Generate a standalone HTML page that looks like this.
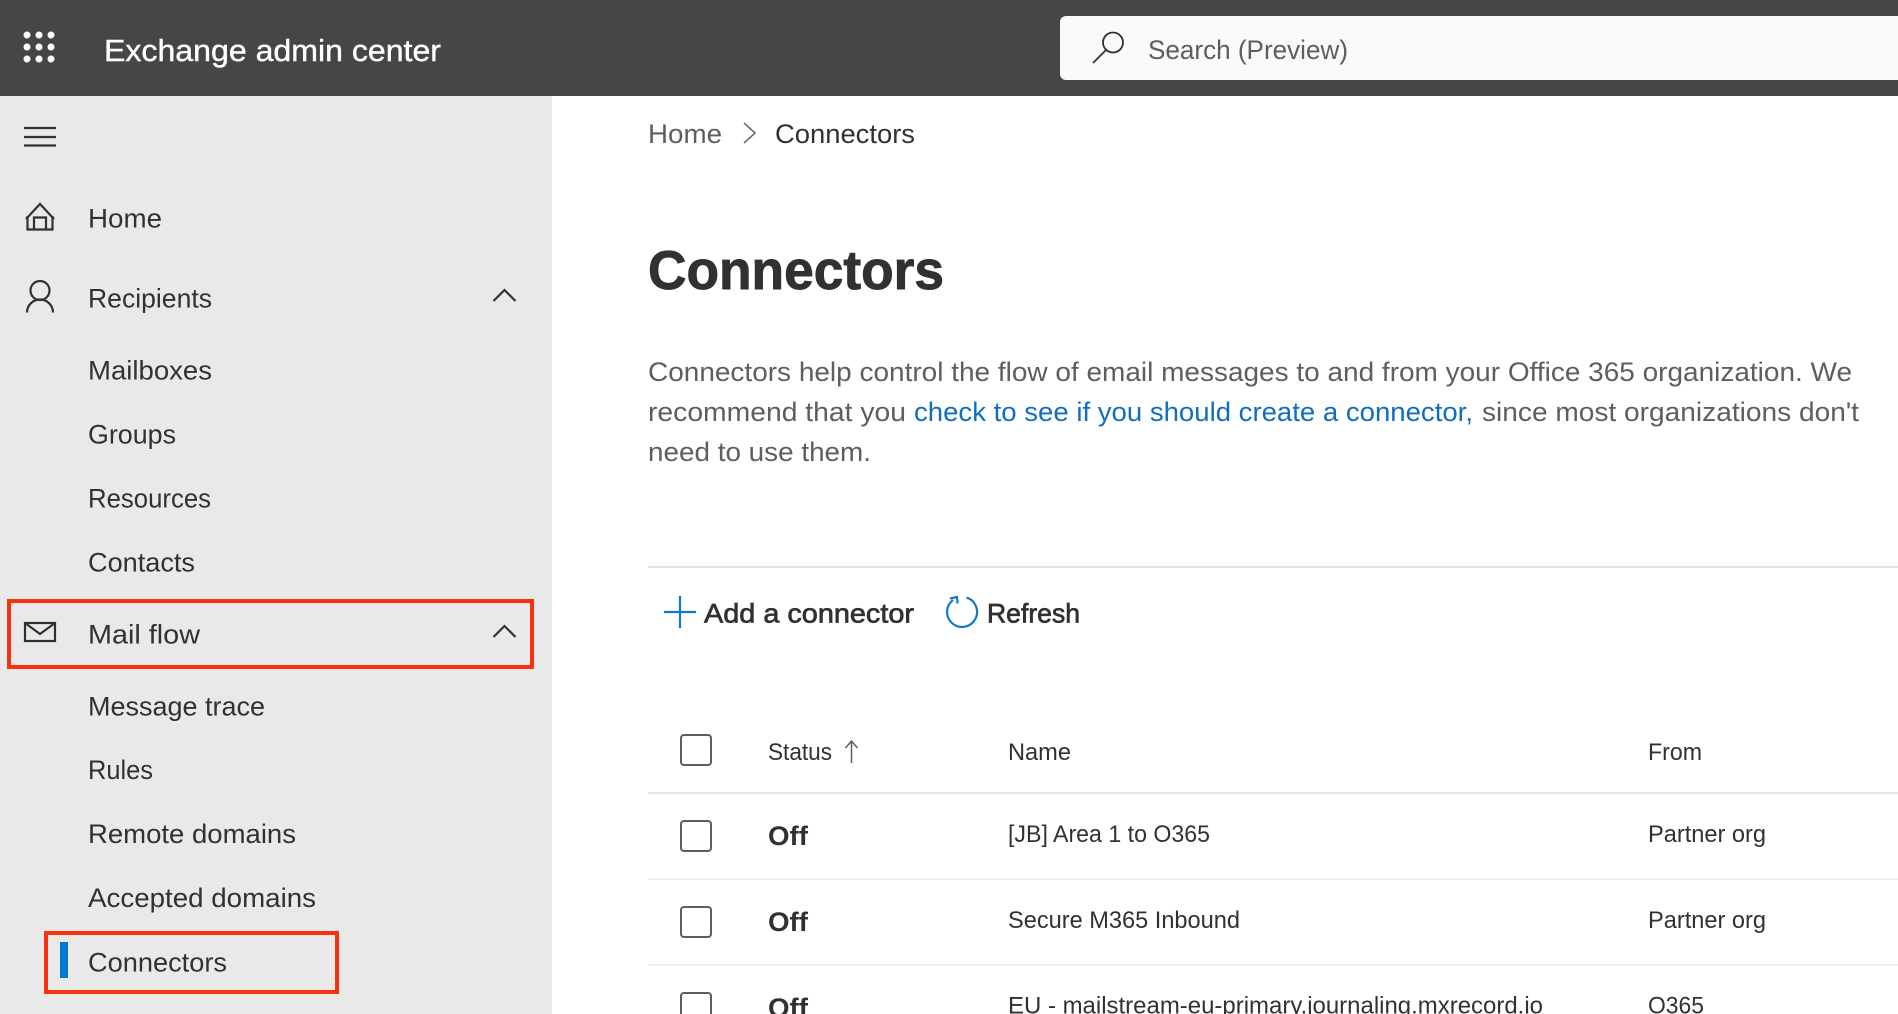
<!DOCTYPE html>
<html lang="en">
<head>
<meta charset="utf-8">
<title>Exchange admin center</title>
<style>
html,body{margin:0;padding:0;background:#fff;width:1898px;height:1014px;overflow:hidden}
svg{display:block}
text{font-family:"Liberation Sans",sans-serif;fill:#323130;font-size:27px;transform:translateX(-1px)}
.h{font-size:24px}
.g{fill:#5f5e5c}
.l{fill:#106ebe}
.ico{fill:none;stroke:#323130;stroke-width:2.200}
.blue{fill:none;stroke:#1279c9;stroke-width:2.200}
.sb{stroke:#323130;stroke-width:.7px}
</style>
</head>
<body>
<svg width="1898" height="1014" viewBox="0 0 1898 1014" xmlns="http://www.w3.org/2000/svg">
<rect width="1898" height="1014" fill="#fff"/>
<rect x="0" y="96" width="552" height="918" fill="#e9e9e9"/>
<rect x="0" y="0" width="1898" height="96" fill="#484644"/>

<g fill="#fff">
<circle cx="27" cy="35" r="3.500"/><circle cx="39" cy="35" r="3.500"/><circle cx="51" cy="35" r="3.500"/>
<circle cx="27" cy="47" r="3.500"/><circle cx="39" cy="47" r="3.500"/><circle cx="51" cy="47" r="3.500"/>
<circle cx="27" cy="59" r="3.500"/><circle cx="39" cy="59" r="3.500"/><circle cx="51" cy="59" r="3.500"/>
</g>
<text x="105" y="61" style="font-size:31px;fill:#fff;stroke:#fff;stroke-width:.4px" textLength="337" lengthAdjust="spacingAndGlyphs">Exchange admin center</text>

<path d="M1066 16H1898V80H1066a6 6 0 0 1-6-6V22a6 6 0 0 1 6-6z" fill="#fafafa"/>
<circle cx="1113" cy="42.500" r="10" fill="none" stroke="#323130" stroke-width="1.800"/>
<path d="M1106 50 L1093 63" fill="none" stroke="#323130" stroke-width="1.800"/>
<text x="1149" y="59" class="g" style="font-size:27px" textLength="200" lengthAdjust="spacingAndGlyphs">Search (Preview)</text>

<path d="M24 128H56M24 137H56M24 145.500H56" class="ico"/>

<path d="M26 219 L40 204 L54 219 M27.500 216 V229.500 H52.500 V216 M34 229.500 V217.500 H46 V229.500" class="ico"/>
<text x="89" y="227.500" textLength="74" lengthAdjust="spacingAndGlyphs">Home</text>

<circle cx="40" cy="290.500" r="9.500" class="ico"/>
<path d="M27 312.500 A13 13 0 0 1 53 312.500" class="ico"/>
<text x="89" y="307.500" textLength="124" lengthAdjust="spacingAndGlyphs">Recipients</text>
<path d="M493.500 301 L504.500 290 L515.500 301" class="ico"/>

<text x="89" y="379.500" textLength="124" lengthAdjust="spacingAndGlyphs">Mailboxes</text>
<text x="89" y="443.500" textLength="88" lengthAdjust="spacingAndGlyphs">Groups</text>
<text x="89" y="507.500" textLength="123" lengthAdjust="spacingAndGlyphs">Resources</text>
<text x="89" y="571.500" textLength="107" lengthAdjust="spacingAndGlyphs">Contacts</text>

<rect x="25" y="623" width="30" height="18" class="ico"/>
<path d="M25 623 L40 634 L55 623" class="ico"/>
<text x="89" y="643.500" textLength="112" lengthAdjust="spacingAndGlyphs">Mail flow</text>
<path d="M493.500 637 L504.500 626 L515.500 637" class="ico"/>
<rect x="9" y="601" width="523" height="66" fill="none" stroke="#f5330f" stroke-width="4"/>

<text x="89" y="715.500" textLength="177" lengthAdjust="spacingAndGlyphs">Message trace</text>
<text x="89" y="779" textLength="65" lengthAdjust="spacingAndGlyphs">Rules</text>
<text x="89" y="843" textLength="208" lengthAdjust="spacingAndGlyphs">Remote domains</text>
<text x="89" y="907" textLength="228" lengthAdjust="spacingAndGlyphs">Accepted domains</text>
<rect x="60" y="942" width="8" height="36" fill="#0078d4"/>
<text x="89" y="971.500" textLength="139" lengthAdjust="spacingAndGlyphs">Connectors</text>
<rect x="46" y="933" width="291" height="59" fill="none" stroke="#f5330f" stroke-width="4"/>

<text x="649" y="143" class="g" textLength="74" lengthAdjust="spacingAndGlyphs">Home</text>
<path d="M744 123 L755 133 L744 143" fill="none" stroke="#605e5c" stroke-width="1.500"/>
<text x="776" y="143" textLength="140" lengthAdjust="spacingAndGlyphs">Connectors</text>
<text x="649" y="289" class="sb" style="font-size:55px;font-weight:700;stroke-width:.9px" textLength="296" lengthAdjust="spacingAndGlyphs">Connectors</text>

<text x="649" y="381" class="g" textLength="1204" lengthAdjust="spacingAndGlyphs">Connectors help control the flow of email messages to and from your Office 365 organization. We</text>
<text x="649" y="421" class="g" textLength="258" lengthAdjust="spacingAndGlyphs">recommend that you</text>
<text x="915" y="421" class="l" textLength="559" lengthAdjust="spacingAndGlyphs">check to see if you should create a connector,</text>
<text x="1483" y="421" class="g" textLength="377" lengthAdjust="spacingAndGlyphs">since most organizations don't</text>
<text x="649" y="461" class="g" textLength="223" lengthAdjust="spacingAndGlyphs">need to use them.</text>

<rect x="648" y="566" width="1250" height="2" fill="#e1e1e1"/>

<path d="M664 612H696M680 596V628" class="blue"/>
<text x="705" y="622.500" class="sb" textLength="210" lengthAdjust="spacingAndGlyphs">Add a connector</text>
<path d="M966.500 597.600 A15 15 0 1 1 953 600" class="blue"/>
<path d="M950 598.500 L957 597 L957.500 603.500" class="blue"/>
<text x="988" y="622.500" class="sb" textLength="93" lengthAdjust="spacingAndGlyphs">Refresh</text>

<g fill="none" stroke="#605e5c" stroke-width="2">
<rect x="681" y="735" width="30" height="30" rx="3"/>
<rect x="681" y="821" width="30" height="30" rx="3"/>
<rect x="681" y="907" width="30" height="30" rx="3"/>
<rect x="681" y="993" width="30" height="30" rx="3"/>
</g>

<text x="769" y="760" class="h" textLength="64" lengthAdjust="spacingAndGlyphs">Status</text>
<path d="M851.500 763 V741 M845.500 748 L851.500 741 L857.500 748" fill="none" stroke="#605e5c" stroke-width="1.500"/>
<text x="1009" y="760" class="h" textLength="63" lengthAdjust="spacingAndGlyphs">Name</text>
<text x="1649" y="760" class="h" textLength="54" lengthAdjust="spacingAndGlyphs">From</text>

<rect x="648" y="792" width="1250" height="2" fill="#e6e6e6"/>
<rect x="648" y="878" width="1250" height="2" fill="#eeeeee"/>
<rect x="648" y="964" width="1250" height="2" fill="#eeeeee"/>

<text x="769" y="845" style="font-weight:700" textLength="40" lengthAdjust="spacingAndGlyphs">Off</text>
<text x="1009" y="842" class="h" textLength="202" lengthAdjust="spacingAndGlyphs">[JB] Area 1 to O365</text>
<text x="1649" y="842" class="h" textLength="118" lengthAdjust="spacingAndGlyphs">Partner org</text>

<text x="769" y="931" style="font-weight:700" textLength="40" lengthAdjust="spacingAndGlyphs">Off</text>
<text x="1009" y="928" class="h" textLength="232" lengthAdjust="spacingAndGlyphs">Secure M365 Inbound</text>
<text x="1649" y="928" class="h" textLength="118" lengthAdjust="spacingAndGlyphs">Partner org</text>

<text x="769" y="1017" style="font-weight:700" textLength="40" lengthAdjust="spacingAndGlyphs">Off</text>
<text x="1009" y="1013.500" class="h" textLength="535" lengthAdjust="spacingAndGlyphs">EU - mailstream-eu-primary.journaling.mxrecord.io</text>
<text x="1649" y="1013.500" class="h" textLength="56" lengthAdjust="spacingAndGlyphs">O365</text>
</svg>
</body>
</html>
